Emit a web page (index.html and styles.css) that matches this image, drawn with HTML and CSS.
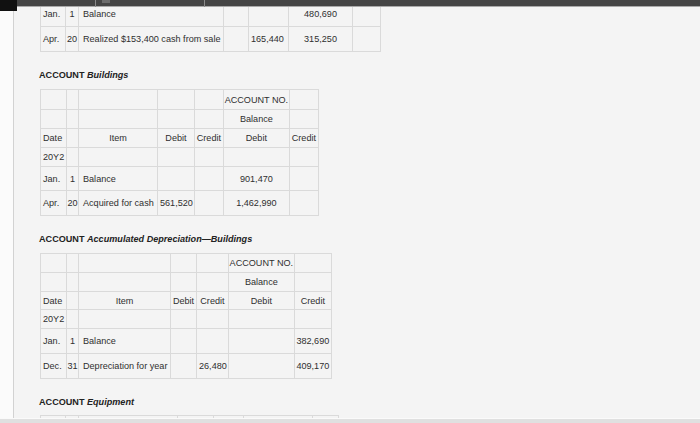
FILE: index.html
```html
<!DOCTYPE html>
<html>
<head>
<meta charset="utf-8">
<link rel="stylesheet" href="styles.css">
</head>
<body>
<div class="topbar">
  <span class="corner"></span>
  <span class="tick tick-a"></span>
  <span class="knob"></span>
  <span class="tick tick-b"></span>
</div>
<div class="main">
  <div class="strip"></div>
  <div class="content">
    <table class="ledger t0">
      <colgroup><col class="w25"><col class="w13"><col class="w145"><col class="w25"><col class="w40"><col class="w64"><col class="w28"></colgroup>
      <tr class="r25"><td>Jan.</td><td class="c">1</td><td class="i">Balance</td><td></td><td></td><td class="c">480,690</td><td></td></tr>
      <tr class="r25"><td>Apr.</td><td class="c">20</td><td class="i">Realized $153,400 cash from sale</td><td></td><td>165,440</td><td class="c">315,250</td><td></td></tr>
    </table>

    <h3 class="acct">ACCOUNT <em>Buildings</em></h3>
    <table class="ledger">
      <colgroup><col class="w26"><col class="w12"><col class="w79"><col class="w36"><col class="w29"><col class="w66"><col class="w29"></colgroup>
      <tr class="r20"><td></td><td></td><td></td><td></td><td></td><td class="c">ACCOUNT NO.</td><td></td></tr>
      <tr class="r19"><td></td><td></td><td></td><td></td><td></td><td class="c">Balance</td><td></td></tr>
      <tr class="r19"><td>Date</td><td></td><td class="c">Item</td><td class="c">Debit</td><td class="c">Credit</td><td class="c">Debit</td><td class="c">Credit</td></tr>
      <tr class="r19"><td>20Y2</td><td></td><td></td><td></td><td></td><td></td><td></td></tr>
      <tr class="r24"><td>Jan.</td><td class="c">1</td><td class="i">Balance</td><td></td><td></td><td class="c">901,470</td><td></td></tr>
      <tr class="r25"><td>Apr.</td><td class="c">20</td><td class="i">Acquired for cash</td><td>561,520</td><td></td><td class="c">1,462,990</td><td></td></tr>
    </table>

    <h3 class="acct">ACCOUNT <em>Accumulated Depreciation—Buildings</em></h3>
    <table class="ledger">
      <colgroup><col class="w26"><col class="w12"><col class="w92"><col class="w26"><col class="w31"><col class="w66"><col class="w37"></colgroup>
      <tr class="r19"><td></td><td></td><td></td><td></td><td></td><td class="c">ACCOUNT NO.</td><td></td></tr>
      <tr class="r19"><td></td><td></td><td></td><td></td><td></td><td class="c">Balance</td><td></td></tr>
      <tr class="r18"><td>Date</td><td></td><td class="c">Item</td><td class="c">Debit</td><td class="c">Credit</td><td class="c">Debit</td><td class="c">Credit</td></tr>
      <tr class="r19"><td>20Y2</td><td></td><td></td><td></td><td></td><td></td><td></td></tr>
      <tr class="r25"><td>Jan.</td><td class="c">1</td><td class="i">Balance</td><td></td><td></td><td></td><td class="c">382,690</td></tr>
      <tr class="r25"><td>Dec.</td><td class="c">31</td><td class="i">Depreciation for year</td><td></td><td>26,480</td><td></td><td class="c">409,170</td></tr>
    </table>

    <h3 class="acct acct-last">ACCOUNT <em>Equipment</em></h3>
    <table class="ledger">
      <colgroup><col class="w25"><col class="w13"><col class="w99"><col class="w36"><col class="w30"><col class="w69"><col class="w26"></colgroup>
      <tr class="r20"><td></td><td></td><td></td><td></td><td></td><td></td><td></td></tr>
    </table>
  </div>
</div>
<div class="bottombar"></div>
</body>
</html>
```

FILE: styles.css
```css
html, body {
  margin: 0;
  padding: 0;
}
body {
  width: 700px;
  height: 423px;
  overflow: hidden;
  background: #ffffff;
  font-family: "Liberation Sans", Arial, sans-serif;
  color: #333333;
}
.topbar {
  position: relative;
  height: 6px;
  background: #454545;
  border-bottom: 1px solid #a9a9a9;
}
.corner {
  position: absolute;
  left: 0;
  top: 0;
  width: 17px;
  height: 11px;
  background: #111111;
}
.tick {
  position: absolute;
  top: 0;
  width: 1px;
  height: 7px;
  background: #8a8a8a;
}
.tick-a { left: 95px; }
.tick-b { left: 204px; }
.knob {
  position: absolute;
  left: 102px;
  top: 0;
  width: 8px;
  height: 3px;
  background: #6c6c6c;
}
.main {
  display: flex;
  height: 411px;
}
.strip {
  width: 13px;
  background: #fbfbfb;
  border-right: 1px solid #d2d2d2;
  flex: none;
}
.content {
  flex: 1;
  background: #f4f4f4;
  overflow: hidden;
  padding-left: 26px;
}
.bottombar {
  height: 4px;
  background: #e0e0e0;
  border-top: 1px solid #fafafa;
}
.ledger {
  border-collapse: collapse;
  table-layout: fixed;
  font-size: 9.1px;
  color: #2f2f2f;
}
.ledger td {
  border: 1px solid #dadada;
  padding: 0 1px 0 2px;
  white-space: nowrap;
  overflow: visible;
  vertical-align: middle;
}
.ledger td.c {
  text-align: center;
  padding: 0;
}
.ledger td.i {
  padding-left: 4px;
}
.t0 {
  margin-top: -6px;
}
.r18 { height: 18px; }
.r19 { height: 19px; }
.r20 { height: 20px; }
.r24 { height: 24px; }
.r25 { height: 25px; }
.w12 { width: 12px; }
.w13 { width: 13px; }
.w25 { width: 25px; }
.w26 { width: 26px; }
.w28 { width: 28px; }
.w29 { width: 29px; }
.w30 { width: 30px; }
.w31 { width: 31px; }
.w36 { width: 36px; }
.w37 { width: 37px; }
.w40 { width: 40px; }
.w64 { width: 64px; }
.w66 { width: 66px; }
.w69 { width: 69px; }
.w79 { width: 79px; }
.w92 { width: 92px; }
.w99 { width: 99px; }
.w145 { width: 145px; }
.acct {
  margin: 17px 0 8px -1px;
  font-size: 9.1px;
  line-height: 12px;
  font-weight: bold;
  color: #222222;
}
.acct em {
  font-style: italic;
}
.acct-last {
  margin-bottom: 7px;
}
```
